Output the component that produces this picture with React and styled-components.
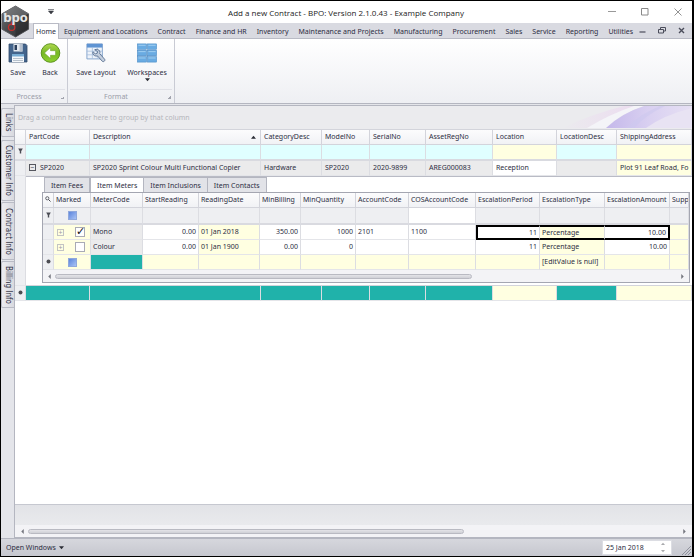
import React, { useState } from "react";
import styled, { createGlobalStyle } from "styled-components";

const ribbonTabs = [
  "Home",
  "Equipment and Locations",
  "Contract",
  "Finance and HR",
  "Inventory",
  "Maintenance and Projects",
  "Manufacturing",
  "Procurement",
  "Sales",
  "Service",
  "Reporting",
  "Utilities",
];

const sideTabs = [
  { name: "Links", size: 29 },
  { name: "Customer Info", size: 61 },
  { name: "Contract Info", size: 58 },
  { name: "Billing Info", size: 47 },
];

const itemTabs = ["Item Fees", "Item Meters", "Item Inclusions", "Item Contacts"];

const contractColumns = [
  { name: "PartCode", width: 64, value: "SP2020", locked: true },
  {
    name: "Description",
    width: 171,
    value: "SP2020 Sprint Colour Multi Functional Copier",
    locked: true,
    sorted: true,
  },
  { name: "CategoryDesc", width: 61, value: "Hardware", locked: true },
  { name: "ModelNo", width: 48, value: "SP2020", locked: true },
  { name: "SerialNo", width: 56, value: "2020-9899", locked: true },
  { name: "AssetRegNo", width: 67, value: "AREG000083", locked: true },
  { name: "Location", width: 64, value: "Reception", tone: "white" },
  { name: "LocationDesc", width: 60, value: "", locked: true },
  {
    name: "ShippingAddress",
    value: "Plot 91 Leaf Road, Fo",
    tone: "cream",
  },
];

const meterColumns = [
  { name: "Marked", width: 37 },
  { name: "MeterCode", width: 52, tone: "grey" },
  { name: "StartReading", width: 56, right: true },
  { name: "ReadingDate", width: 61, tone: "cream" },
  { name: "MinBilling", width: 41, right: true },
  { name: "MinQuantity", width: 55, right: true },
  { name: "AccountCode", width: 53 },
  { name: "COSAccountCode", width: 67, filter: "white" },
  { name: "EscalationPeriod", width: 64, right: true },
  { name: "EscalationType", width: 65, tone: "cream" },
  { name: "EscalationAmount", width: 65, right: true },
  { name: "Supp", tone: "cream" },
];

const meters = [
  {
    marked: true,
    focused: true,
    values: ["Mono", "0.00", "01 Jan 2018", "350.00", "1000", "2101", "1100", "11", "Percentage", "10.00", ""],
  },
  {
    marked: false,
    values: ["Colour", "0.00", "01 Jan 1900", "0.00", "0", "", "", "11", "Percentage", "10.00", ""],
  },
];

const tones = {
  white: "#ffffff",
  cream: "#ffffe1",
  cyan: "#e0ffff",
  grey: "#ebebec",
  teal: "#20b2aa",
  filter: "#eeeff2",
};

const Logo = () => (
  <LogoSvg viewBox="0 0 30 34" role="img" aria-label="bpo">
    <defs>
      <linearGradient id="hex" x1="0" y1="0" x2="1" y2="1">
        <stop offset="0" stopColor="#77787b" />
        <stop offset="0.5" stopColor="#47484b" />
        <stop offset="1" stopColor="#2c2d30" />
      </linearGradient>
    </defs>
    <path d="M15 1 28.5 9v16L15 33 1 25V9z" fill="url(#hex)" stroke="#5b5c60" />
    <path d="M15 1 28.5 9 15 16 1 9z" fill="#8a8b8e" opacity="0.4" />
    <path d="M15 33V17l13.500-8v16z" fill="#1f2023" opacity="0.35" />
    <circle cx="11" cy="23" r="3.300" fill="none" stroke="#c8302c" strokeWidth="1.300" />
    <path d="M11 17v4" stroke="#c8302c" />
    <LogoText x="15" y="18" textAnchor="middle">
      bpo
    </LogoText>
  </LogoSvg>
);

const SaveIcon = () => (
  <svg width="20" height="20" viewBox="0 0 20 20" aria-hidden="true">
    <path d="M1 1h16.500L19 2.500V19H1z" fill="#43648c" stroke="#31496a" strokeWidth="0.800" />
    <path d="M5.500 1h9v7.500h-9z" fill="#e3e8ef" />
    <path d="M6.500 2h2.500v5H6.500z" fill="#2b3f5c" />
    <path d="M11.500 1h3v7.500h-3z" fill="#b5c0ce" />
    <path d="M4 11h12v8H4z" fill="#f5f8fb" />
    <path d="M4 11h12v2.500H4z" fill="#78add4" />
    <path d="M5 15.500h10M5 17.500h10" stroke="#a8b4c2" strokeWidth="0.800" />
  </svg>
);

const BackIcon = () => (
  <svg width="21" height="20" viewBox="0 0 21 20" aria-hidden="true">
    <defs>
      <linearGradient id="green" x1="0" y1="0" x2="0" y2="1">
        <stop offset="0" stopColor="#b0d94f" />
        <stop offset="0.500" stopColor="#76b823" />
        <stop offset="1" stopColor="#8fd130" />
      </linearGradient>
    </defs>
    <circle cx="10.500" cy="10" r="9.300" fill="url(#green)" stroke="#5d9420" />
    <path d="M4.500 10 10.500 4.500v3.200h5v4.600h-5v3.200z" fill="#fff" stroke="#6a9d2c" strokeWidth="0.500" />
  </svg>
);

const LayoutIcon = () => (
  <svg width="22" height="22" viewBox="0 0 22 22" aria-hidden="true">
    <path d="M1 1h17v16.500H1z" fill="#eef3fa" stroke="#7d9fca" />
    <path d="M1 1h17v4H1z" fill="#5f94d3" />
    <path d="M1 9h17M1 13h17M7 5v12.500M12.500 5v12.500" stroke="#a3bbdb" strokeWidth="0.800" />
    <path
      d="M9.500 7.500c2-1.200 4.600-.5 5.500 1.400.500 1.100.400 2 .1 2.800l5.500 6.300c.9 1.400-1.300 3.300-2.600 2.200l-5.400-6c-2 .6-4.300-.3-5-2.300-.3-.9-.2-1.700 0-2.300l2.600 2.300 2.200-.700.300-1.900z"
      fill="#c4cfde"
      stroke="#4d6688"
      strokeWidth="0.900"
    />
  </svg>
);

const WorkspacesIcon = () => (
  <svg width="22" height="22" viewBox="0 0 22 22" aria-hidden="true">
    {[1, 8, 15].map((y) =>
      [0.5, 11.5].map((x) => (
        <g key={`${x}-${y}`}>
          <rect x={x} y={y} width="10" height="6" fill="#69abe2" stroke="#4486c2" strokeWidth="0.600" />
          <path d={`M${x + 1} ${y + 1.500}h8`} stroke="#a6d2f3" />
        </g>
      ))
    )}
  </svg>
);

const FilterIcon = () => (
  <Glyph width="5" height="6" viewBox="0 0 5 6" aria-hidden="true">
    <path d="M0.200 0.500h4.600L3.200 3.300V5.500H1.800V3.300z" fill="#4a4c54" />
  </Glyph>
);

const DotIcon = () => (
  <Glyph width="5" height="5" viewBox="0 0 5 5" aria-hidden="true">
    <circle cx="2.500" cy="2.500" r="2" fill="#4c4d52" />
  </Glyph>
);

const SearchIcon = () => (
  <Glyph width="6" height="6" viewBox="0 0 6 6" aria-hidden="true">
    <circle cx="2.300" cy="2.300" r="1.600" fill="none" stroke="#44464f" strokeWidth="0.800" />
    <path d="M3.500 3.500 5.500 5.500" stroke="#44464f" />
  </Glyph>
);

const Arrow = ({ d, label, size = 5, color = "#2a2c34" }) => (
  <Glyph width={size} height={size} viewBox="0 0 6 6" aria-label={label}>
    <path d={d} fill={color} />
  </Glyph>
);

const DOWN = "M0 1.500h6L3 5z";
const UP = "M0 4.500h6L3 1z";
const LEFT = "M4.500 0v6L1.500 3z";
const RIGHT = "M1.500 0v6L4.500 3z";

function ScrollBar({ end, gutter }) {
  return (
    <ScrollTrack $gutter={gutter}>
      <Arrow d={LEFT} color="#74767e" />
      <ScrollRoom>
        <ScrollThumb $end={end} />
      </ScrollRoom>
      <Arrow d={RIGHT} color="#74767e" />
    </ScrollTrack>
  );
}

function MeterGrid() {
  const [marked, setMarked] = useState(meters.map((m) => m.marked));
  const toggle = (index) =>
    setMarked(marked.map((m, i) => (i === index ? !m : m)));

  return (
    <DetailPanel>
      <ItemTabList role="tablist">
        {itemTabs.map((tab) => (
          <ItemTab key={tab} role="tab" $active={tab === "Item Meters"}>
            {tab}
          </ItemTab>
        ))}
      </ItemTabList>
      <MeterFrame>
        <Grid>
          <colgroup>
            <Col $width={11} />
            {meterColumns.map((col) => (
              <Col key={col.name} $width={col.width} />
            ))}
          </colgroup>
          <thead>
            <tr>
              <HeadCell $center>
                <SearchIcon />
              </HeadCell>
              {meterColumns.map((col) => (
                <HeadCell key={col.name} $tight>{col.name}</HeadCell>
              ))}
            </tr>
          </thead>
          <tbody>
            <FilterRow $height={17}>
              <Cell $center $tone="filter">
                <FilterIcon />
              </Cell>
              {meterColumns.map((col, i) => (
                <Cell key={col.name} $tone={col.filter || "filter"} $center={i === 0}>
                  {i === 0 && <MixedBox type="checkbox" aria-label="Filter marked" />}
                </Cell>
              ))}
            </FilterRow>
            {meters.map((meter, row) => (
              <tr key={meter.values[0]}>
                <Cell $tone="filter" />
                <Cell $tone="cream">
                  <MarkedCell>
                    <Expander aria-label="Expand" $faint>+</Expander>
                    <MarkBox
                      type="checkbox"
                      aria-label={meter.values[0]}
                      checked={marked[row]}
                      onChange={() => toggle(row)}
                    />
                  </MarkedCell>
                </Cell>
                {meter.values.map((value, i) => {
                  const col = meterColumns[i + 1];
                  const focused = meter.focused && i >= 7 && i <= 9;
                  return (
                    <Cell
                      key={col.name}
                      $tone={col.tone}
                      $right={col.right}
                      $tight
                      $focus={focused}
                      $first={i === 7}
                      $last={i === 9}
                    >
                      {value}
                    </Cell>
                  );
                })}
              </tr>
            ))}
            <tr>
              <Cell $center $tone="filter">
                <DotIcon />
              </Cell>
              {meterColumns.map((col, i) => (
                <Cell key={col.name} $tight $center={i === 0} $tone={i === 1 ? "teal" : "cream"}>
                  {i === 0 && <MixedBox type="checkbox" aria-label="New row marked" />}
                  {col.name === "EscalationType" && "[EditValue is null]"}
                </Cell>
              ))}
            </tr>
          </tbody>
        </Grid>
        <ScrollBar end={67} gutter={4} />
      </MeterFrame>
    </DetailPanel>
  );
}

function ContractGrid() {
  return (
    <Grid>
      <colgroup>
        <Col $width={11} />
        {contractColumns.map((col) => (
          <Col key={col.name} $width={col.width} />
        ))}
      </colgroup>
      <thead>
        <tr>
          <HeadCell />
          {contractColumns.map((col) => (
            <HeadCell key={col.name}>
              <HeadLabel>
                {col.name}
                {col.sorted && <Arrow d={UP} label="Sorted ascending" />}
              </HeadLabel>
            </HeadCell>
          ))}
        </tr>
      </thead>
      <tbody>
        <FilterRow $height={16}>
          <Cell $center $tone="filter">
            <FilterIcon />
          </Cell>
          {contractColumns.map((col) => (
            <Cell key={col.name} $tone={col.locked ? "cyan" : "cream"}>
              <FilterInput aria-label={`Filter ${col.name}`} />
            </Cell>
          ))}
        </FilterRow>
        <tr>
          <Cell $tone="filter" />
          {contractColumns.map((col, i) => (
            <Cell key={col.name} $tone={col.locked ? "grey" : col.tone}>
              {i === 0 && <Expander aria-label="Collapse">−</Expander>}
              {col.value}
            </Cell>
          ))}
        </tr>
        <tr>
          <Cell $tone="filter" />
          <DetailCell colSpan={contractColumns.length}>
            <MeterGrid />
          </DetailCell>
        </tr>
        <tr>
          <Cell $center $tone="filter">
            <DotIcon />
          </Cell>
          {contractColumns.map((col) => (
            <Cell key={col.name} $tone={col.locked ? "teal" : "cream"} />
          ))}
        </tr>
      </tbody>
    </Grid>
  );
}

function App() {
  return (
    <Window>
      <GlobalStyle />
      <TitleBar>
        <Logo />
        <QuickAccess aria-label="Customise quick access">
          <svg width="6" height="6" viewBox="0 0 6 6">
            <path d="M0 .5h6M.5 2h5L3 5z" fill="#3a3c44" stroke="#3a3c44" strokeWidth="0.600" />
          </svg>
        </QuickAccess>
        <Title>Add a new Contract - BPO: Version 2.1.0.43 - Example Company</Title>
        <WindowButtons>
          <WindowButton aria-label="Minimise">
            <svg width="8" height="8" viewBox="0 0 8 8"><path d="M0 3.500h8" stroke="#999" /></svg>
          </WindowButton>
          <WindowButton aria-label="Maximise">
            <svg width="8" height="8" viewBox="0 0 8 8"><path d="M.5.5h6.500v6.500H.5z" fill="none" stroke="#888" /></svg>
          </WindowButton>
          <WindowButton aria-label="Close">
            <svg width="8" height="8" viewBox="0 0 8 8"><path d="M.5.5l7 7M7.500.5l-7 7" stroke="#777" strokeWidth="0.800" /></svg>
          </WindowButton>
        </WindowButtons>
      </TitleBar>

      <RibbonTabs role="tablist">
        {ribbonTabs.map((tab) => (
          <RibbonTab key={tab} role="tab" $active={tab === "Home"}>
            {tab}
          </RibbonTab>
        ))}
        <ChildButtons>
          <ChildButton aria-label="Minimise contract">
            <svg width="7" height="7" viewBox="0 0 7 7"><path d="M.5 5h6" stroke="#4a4c5a" strokeWidth="1.200" /></svg>
          </ChildButton>
          <ChildButton aria-label="Restore contract">
            <svg width="8" height="7" viewBox="0 0 8 7">
              <path d="M2.500 2.500v-2h5v3.500h-2M.5 2.500h5v3.500h-5z" fill="none" stroke="#4a4c5a" />
            </svg>
          </ChildButton>
          <ChildButton aria-label="Close contract">
            <svg width="7" height="7" viewBox="0 0 7 7"><path d="M1 1l5 5M6 1l-5 5" stroke="#4a4c5a" strokeWidth="1.400" /></svg>
          </ChildButton>
        </ChildButtons>
      </RibbonTabs>

      <Ribbon>
        <RibbonGroup $width={67}>
          <RibbonItems>
            <RibbonButton $width={32}><SaveIcon /><span>Save</span></RibbonButton>
            <RibbonButton $width={32}><BackIcon /><span>Back</span></RibbonButton>
          </RibbonItems>
          <GroupCaption>Process</GroupCaption>
        </RibbonGroup>
        <RibbonGroup $width={107}>
          <RibbonItems>
            <RibbonButton $width={52}><LayoutIcon /><span>Save Layout</span></RibbonButton>
            <RibbonButton $width={50}>
              <WorkspacesIcon />
              <span>Workspaces</span>
              <Arrow d={DOWN} />
            </RibbonButton>
          </RibbonItems>
          <GroupCaption>Format</GroupCaption>
        </RibbonGroup>
      </Ribbon>

      <Main>
        <SideBar>
          {sideTabs.map((tab) => (
            <SideTab key={tab.name} $size={tab.size}>{tab.name}</SideTab>
          ))}
        </SideBar>
        <Workspace>
          <GroupBox>
            <span>Drag a column header here to group by that column</span>
            <Swirl viewBox="0 0 130 22" preserveAspectRatio="xMaxYMid slice" aria-hidden="true">
              <defs>
                <linearGradient id="swirl" x1="0" y1="0" x2="1" y2="0">
                  <stop offset="0" stopColor="#c4b8ea" />
                  <stop offset="0.500" stopColor="#d9d0f1" />
                  <stop offset="1" stopColor="#e6e0f3" />
                </linearGradient>
                <linearGradient id="pink" x1="0" y1="0" x2="1" y2="0">
                  <stop offset="0" stopColor="#ebebee" />
                  <stop offset="1" stopColor="#ecdcf0" />
                </linearGradient>
              </defs>
              <path d="M0 22Q30 8 62 0H75Q52 8 36 22z" fill="url(#pink)" />
              <path d="M25 22Q48 8 72 0H82Q58 8 44 22z" fill="#f4f4f8" />
              <path d="M44 22Q60 7 82 0H130V22z" fill="url(#swirl)" />
              <path d="M84 22Q102 9 130 2V22z" fill="#e8e3f3" />
              <path d="M64 22Q78 8 98 0h5Q84 9 72 22z" fill="#cdc8ef" opacity="0.600" />
            </Swirl>
          </GroupBox>
          <ContractGrid />
          <EmptyArea />
          <GridFooter />
          <ScrollBar end={67} gutter={5} />
        </Workspace>
      </Main>

      <StatusBar>
        <OpenWindows>
          Open Windows
          <Arrow d={DOWN} />
        </OpenWindows>
        <StatusDate>
          <DateInput aria-label="Date" defaultValue="25 Jan 2018" />
          <Spinner>
            <SpinButton aria-label="Next day"><Arrow d={UP} size={4} /></SpinButton>
            <SpinButton aria-label="Previous day"><Arrow d={DOWN} size={4} /></SpinButton>
          </Spinner>
        </StatusDate>
        <Grip width="10" height="10" viewBox="0 0 10 10" aria-hidden="true">
          <path d="M1 10l9-9M4 10l6-6M7 10l3-3" stroke="#8f919c" />
        </Grip>
      </StatusBar>
    </Window>
  );
}

const GlobalStyle = createGlobalStyle`
  * {
    box-sizing: border-box;
  }

  body {
    margin: 0;
  }

  body, button, input {
    font-family: "Noto Sans", sans-serif;
    font-size: 7px;
    color: #2c2d42;
  }

  button {
    padding: 0;
    border: none;
    background: none;
    white-space: nowrap;
  }
`;

const Window = styled.div`
  display: flex;
  flex-direction: column;
  min-height: 100vh;
  border: 1px solid #000;
  border-right-width: 2px;
  background-color: #e4e5ea;
  overflow: hidden;
`;

const Glyph = styled.svg`
  display: inline-block;
  flex: none;
`;

const TitleBar = styled.header`
  position: relative;
  display: flex;
  align-items: center;
  height: 22px;
  background-color: #fff;
`;

const LogoSvg = styled.svg`
  position: absolute;
  left: 0;
  top: 4px;
  width: 29px;
  height: 33px;
`;

const LogoText = styled.text`
  font-family: "DejaVu Sans", sans-serif;
  font-size: 12px;
  font-weight: 700;
  fill: #e4e4e4;
`;

const QuickAccess = styled.button`
  display: flex;
  margin-left: 47px;
`;

const Title = styled.h1`
  flex: 1;
  margin: 0;
  padding-left: 30px;
  text-align: center;
  font-family: "Open Sans", sans-serif;
  font-size: 8px;
  font-weight: 400;
  color: #222;
`;

const WindowButtons = styled.div`
  display: flex;
  gap: 25px;
  padding-right: 10px;
`;

const WindowButton = styled.button`
  display: flex;
`;

const RibbonTabs = styled.nav`
  display: flex;
  align-items: stretch;
  height: 16px;
  padding-left: 32px;
  background-color: #d9dae1;
  border-bottom: 1px solid #b9bbc5;
`;

const RibbonTab = styled.button`
  height: ${({ $active }) => ($active ? "16px" : "15px")};
  padding: ${({ $active }) => ($active ? "0 2px" : "0 4px")};
  border: 1px solid ${({ $active }) => ($active ? "#b9bbc5" : "transparent")};
  border-bottom: none;
  background-color: ${({ $active }) => ($active ? "#fff" : "transparent")};
`;

const ChildButtons = styled.div`
  display: flex;
  align-items: center;
  gap: 12px;
  margin-left: auto;
  padding-right: 7px;
`;

const ChildButton = styled.button`
  display: flex;
`;

const Ribbon = styled.section`
  display: flex;
  height: 65px;
  background: linear-gradient(#ffffff, #eeeff3);
  border-bottom: 1px solid #b4b6c0;
`;

const RibbonGroup = styled.div`
  display: flex;
  flex-direction: column;
  width: ${({ $width }) => $width}px;
  border-right: 1px solid #c9cbd4;
`;

const RibbonItems = styled.div`
  display: flex;
  justify-content: center;
  flex: 1;
  padding-top: 4px;
`;

const RibbonButton = styled.button`
  display: flex;
  flex-direction: column;
  align-items: center;
  width: ${({ $width }) => $width}px;

  & > svg:first-child {
    height: 20px;
  }

  & > span {
    margin-top: 5px;
    line-height: 9px;
  }
`;

const GroupCaption = styled.div`
  height: 14px;
  margin: 0 2px;
  padding-right: 10px;
  border-top: 1px solid #e0e1e7;
  line-height: 13px;
  text-align: center;
  color: #9a9ca8;
  background: linear-gradient(135deg, transparent 50%, #a2a4ae 50%) right 1px bottom 4px / 3px 3px no-repeat;
`;

const Main = styled.main`
  display: flex;
  flex: 1;
  padding-top: 1px;
`;

const SideBar = styled.aside`
  display: flex;
  flex-direction: column;
  gap: 1px;
  width: 13px;
  padding-top: 3px;
`;

const SideTab = styled.button`
  height: ${({ $size }) => $size}px;
  width: 13px;
  writing-mode: vertical-rl;
  border: 1px solid #b9bbc5;
  border-right: none;
  border-radius: 2px 0 0 2px;
  background: linear-gradient(90deg, #ececf0, #d8d9df);
  font-family: "DejaVu Sans Condensed", "DejaVu Sans", sans-serif;
  font-size: 8px;

  &:first-child {
    margin-bottom: 2px;
  }
`;

const Workspace = styled.section`
  display: flex;
  flex-direction: column;
  flex: 1;
  min-width: 0;
  border: 1px solid #b4b6c0;
  border-right: none;
  background-color: #fff;
`;

const GroupBox = styled.div`
  position: relative;
  height: 24px;
  padding-left: 3px;
  line-height: 23px;
  color: #b4b5bb;
  background-color: #ebebee;
  border-bottom: 1px solid #d3d4db;
`;

const Swirl = styled.svg`
  position: absolute;
  right: 0;
  top: 0;
  width: 130px;
  height: 22px;
`;

const Grid = styled.table`
  width: 100%;
  table-layout: fixed;
  border-collapse: separate;
  border-spacing: 0;
`;

const Col = styled.col`
  width: ${({ $width }) => ($width ? `${$width}px` : "auto")};
`;

const HeadCell = styled.th`
  height: 15px;
  padding: 0 ${({ $tight, $center }) => ($tight ? "0 0 2px" : $center ? "1px" : "0 0 3px")};
  overflow: hidden;
  white-space: nowrap;
  font-weight: 400;
  line-height: 12px;
  text-align: ${({ $center }) => ($center ? "center" : "left")};
  background: linear-gradient(#fcfcfd, #f1f2f5);
  border-right: 1px solid #d3d4db;
  border-bottom: 1px solid #d3d4db;
`;

const HeadLabel = styled.div`
  display: flex;
  align-items: center;
  justify-content: space-between;
  padding-right: 4px;
`;

const focusLine = "2px solid #000";

const Cell = styled.td`
  height: 15px;
  padding: 0 ${({ $tight, $center }) => ($center ? "0" : $tight ? "2px" : "0 0 3px")};
  overflow: hidden;
  white-space: nowrap;
  line-height: 10px;
  text-align: ${({ $right, $center }) => ($right ? "right" : $center ? "center" : "left")};
  background-color: ${({ $tone }) => tones[$tone || "white"]};
  border-right: 1px solid #dcdde2;
  border-bottom: 1px solid #e4e5e9;
  ${({ $focus, $first, $last }) =>
    $focus &&
    `
    border-top: ${focusLine};
    border-bottom: ${focusLine};
    ${$first ? `border-left: ${focusLine};` : ""}
    ${$last ? `border-right: ${focusLine};` : ""}
  `}
`;

const FilterRow = styled.tr`
  & > td {
    height: ${({ $height }) => $height}px;
    border-bottom: 2px solid #d9dae0;
  }
`;

const FilterInput = styled.input`
  display: block;
  width: 100%;
  height: 12px;
  padding: 0;
  border: none;
  outline: none;
  background: transparent;
`;

const DetailCell = styled.td`
  padding: 0 2px 2px 16px;
  border-top: 1px solid #b9bbc5;
  border-bottom: 1px solid #d3d4db;
  background-color: #fff;
`;

const DetailPanel = styled.div`
  display: flex;
  flex-direction: column;
`;

const ItemTabList = styled.div`
  display: flex;
  padding-left: 2px;
`;

const ItemTab = styled.button`
  height: 15px;
  padding: 0 6px;
  border: 1px solid #b4b6c0;
  border-left-width: ${({ $active }) => ($active ? "1px" : "0")};
  border-bottom: none;
  background-color: ${({ $active }) => ($active ? "#fff" : "#e2e3e8")};

  &:first-child {
    border-left-width: 1px;
  }
`;

const MeterFrame = styled.div`
  border: 1px solid #a4a6b1;
`;

const MarkedCell = styled.div`
  display: flex;
  align-items: center;
  gap: 11px;
`;

const Expander = styled.button`
  width: 7px;
  height: 7px;
  margin-right: ${({ $faint }) => ($faint ? "0" : "4px")};
  border: 1px solid ${({ $faint }) => ($faint ? "#c3c4c4" : "#55565e")};
  line-height: 5px;
  color: ${({ $faint }) => ($faint ? "#a0a0a8" : "#33344a")};
`;

const MarkBox = styled.input`
  appearance: none;
  width: 10px;
  height: 10px;
  margin: 0;
  border: 1px solid #a9abb5;
  background-color: #fff;

  &:checked::after {
    content: "✓";
    display: block;
    font-family: "DejaVu Sans", sans-serif;
    font-size: 11px;
    font-weight: 700;
    line-height: 8px;
    color: #111;
  }
`;

const MixedBox = styled.input`
  appearance: none;
  display: inline-block;
  width: 9px;
  height: 9px;
  margin: 0;
  vertical-align: middle;
  border: 1px solid #90a8dc;
  background: linear-gradient(135deg, #5c85dc, #a9c3f5);
`;

const ScrollTrack = styled.div`
  display: flex;
  align-items: center;
  gap: 3px;
  height: 12px;
  padding: 0 ${({ $gutter }) => $gutter}px;
  background-color: #f3f3f6;
`;

const ScrollRoom = styled.div`
  flex: 1;
`;

const ScrollThumb = styled.div`
  width: ${({ $end }) => $end}%;
  height: 5px;
  border: 1px solid #b9bac2;
  border-radius: 3px;
  background: linear-gradient(#e4e4e8, #cfd0d6);
`;

const EmptyArea = styled.div`
  flex: 1;
`;

const GridFooter = styled.div`
  height: 21px;
  border-top: 1px solid #c6c8d0;
  background: linear-gradient(#e2e3e7, #e9eaed);
`;

const StatusBar = styled.footer`
  display: flex;
  align-items: center;
  height: 18px;
  background: linear-gradient(#d6d7dd, #c6c7cf);
  border-top: 1px solid #b4b6c0;
`;

const OpenWindows = styled.button`
  display: flex;
  align-items: center;
  gap: 3px;
  margin-left: 5px;
`;

const StatusDate = styled.div`
  display: flex;
  width: 70px;
  height: 15px;
  margin-left: auto;
  background-color: #fff;
  border: 1px solid #dcdde3;
`;

const DateInput = styled.input`
  flex: 1;
  min-width: 0;
  padding: 0 3px;
  border: none;
  outline: none;
  background: transparent;
`;

const Spinner = styled.div`
  display: flex;
  flex-direction: column;
  justify-content: space-around;
  width: 10px;
  opacity: 0.4;
`;

const SpinButton = styled.button`
  display: flex;
`;

const Grip = styled.svg`
  margin: 5px 1px 0 9px;
`;

export default App;
